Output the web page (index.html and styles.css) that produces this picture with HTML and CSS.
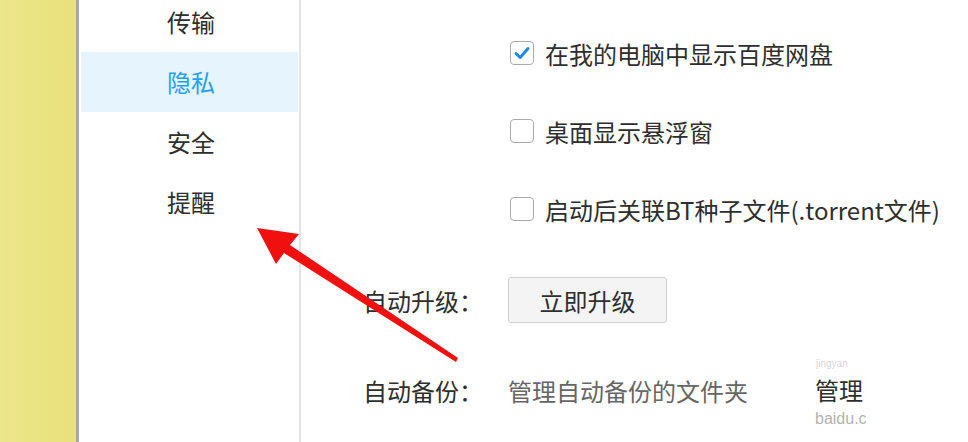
FILE: index.html
```html
<!DOCTYPE html>
<html lang="zh">
<head>
<meta charset="utf-8">
<link rel="stylesheet" href="styles.css">
</head>
<body>
<div class="page">
  <div class="desk"></div>
  <nav class="sidebar">
    <ul class="menu">
      <li class="item">传输</li>
      <li class="item active">隐私</li>
      <li class="item">安全</li>
      <li class="item">提醒</li>
    </ul>
  </nav>
  <main class="main">
    <div class="checks">
      <label class="check-row">
        <span class="box checked"><svg viewBox="0 0 22 22" width="22" height="22"><path d="M5 11.5 L9.2 15.5 L17 6.5" fill="none" stroke="#1b8ae6" stroke-width="3" stroke-linecap="round" stroke-linejoin="round"/></svg></span>
        <span class="check-text">在我的电脑中显示百度网盘</span>
      </label>
      <label class="check-row">
        <span class="box"></span>
        <span class="check-text">桌面显示悬浮窗</span>
      </label>
      <label class="check-row">
        <span class="box"></span>
        <span class="check-text">启动后关联BT种子文件(.torrent文件)</span>
      </label>
    </div>
    <div class="field upgrade">
      <span class="field-label">自动升级：</span>
      <button class="btn">立即升级</button>
    </div>
    <div class="field backup">
      <span class="field-label">自动备份：</span>
      <span class="field-desc">管理自动备份的文件夹</span>
      <div class="manage-wrap">
        <span class="manage">管理</span>
        <span class="wm1">jingyan</span>
        <span class="wm2">baidu.c</span>
      </div>
    </div>
  </main>
</div>
<svg class="arrow" width="968" height="442" viewBox="0 0 968 442">
  <polygon points="257,228 299,234 290,245 458,358 456,362 284,253 276,264" fill="#f01010"/>
</svg>
</body>
</html>
```
FILE: styles.css
```css
* { box-sizing: border-box; }
html, body {
  margin: 0;
  padding: 0;
  width: 968px;
  height: 442px;
  overflow: hidden;
  background: #ffffff;
  font-family: "Noto Sans CJK SC", "Noto Sans", sans-serif;
  color: #2e2e2e;
}
.page {
  display: flex;
  width: 968px;
  height: 442px;
}
.desk {
  width: 79px;
  flex: none;
  background: linear-gradient(to right, #ece68c, #e9e17a);
  border-right: 3px solid #a8a8a0;
}
.sidebar {
  width: 222px;
  flex: none;
  padding-left: 2px;
  padding-right: 1px;
  border-right: 2px solid #e4e4e4;
  background: #ffffff;
}
.menu {
  list-style: none;
  margin: -8px 0 0 0;
  padding: 0;
}
.item {
  height: 60px;
  line-height: 60px;
  padding-left: 86px;
  font-size: 24px;
  color: #2e2e2e;
}
.item.active {
  background: #e6f4fd;
  color: #23a0f0;
}
.main {
  flex: 1;
  padding-top: 14px;
}
.checks {
  padding-left: 209px;
}
.check-row {
  display: flex;
  align-items: center;
  height: 78px;
  gap: 11px;
}
.box {
  width: 24px;
  height: 24px;
  border: 1.5px solid #a9a9a9;
  border-radius: 4px;
  background: #ffffff;
  display: flex;
  align-items: center;
  justify-content: center;
}
.box svg { display: block; }
.check-text {
  font-size: 24px;
  color: #2e2e2e;
}
.field {
  display: flex;
  align-items: center;
  height: 46px;
  padding-left: 62px;
}
.upgrade { margin-top: 29px; }
.backup { margin-top: 44px; }
.field-label {
  width: 145px;
  font-size: 24px;
  color: #2e2e2e;
}
.btn {
  width: 159px;
  height: 46px;
  border: 1px solid #cfcfcf;
  border-radius: 3px;
  background: #f4f4f4;
  font-family: inherit;
  font-size: 24px;
  color: #2e2e2e;
  padding: 0;
}
.field-desc {
  font-size: 24px;
  color: #666666;
  width: 307px;
}
.manage-wrap {
  position: relative;
  height: 24px;
}
.manage {
  display: block;
  font-size: 24px;
  line-height: 24px;
  height: 24px;
  color: #2e2e2e;
}
.wm1 {
  position: absolute;
  left: 1px;
  top: -19px;
  font-family: "Liberation Sans", sans-serif;
  font-size: 10px;
  line-height: 10px;
  color: rgba(170,170,170,0.5);
  pointer-events: none;
}
.wm2 {
  position: absolute;
  left: 0;
  top: 33px;
  font-family: "Liberation Sans", sans-serif;
  font-size: 16px;
  line-height: 16px;
  color: rgba(150,150,150,0.75);
  pointer-events: none;
}
.arrow {
  position: absolute;
  left: 0;
  top: 0;
  pointer-events: none;
}
```
